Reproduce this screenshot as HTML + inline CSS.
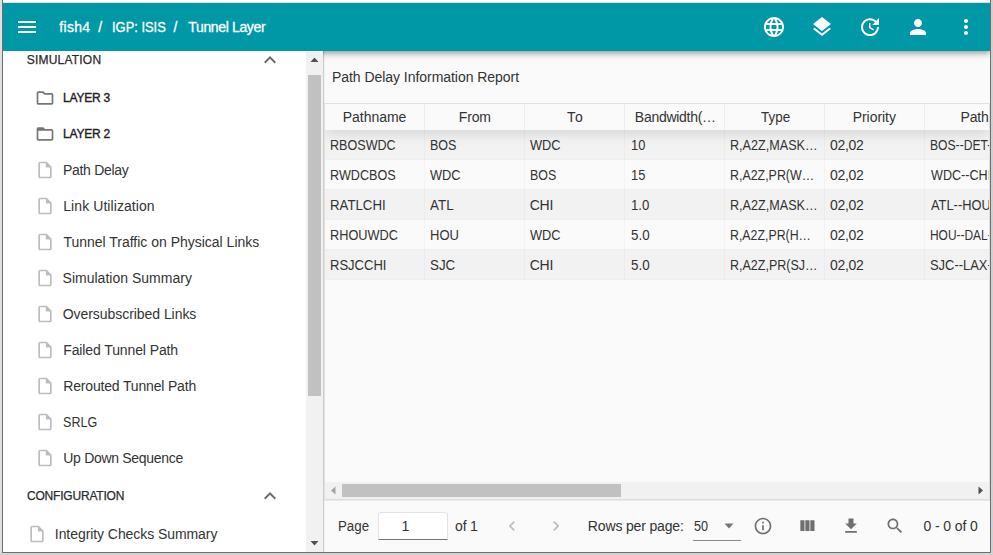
<!DOCTYPE html>
<html><head><meta charset="utf-8">
<style>
*{box-sizing:border-box;margin:0;padding:0}
html,body{width:993px;height:555px;overflow:hidden;background:#fff}
body{font-family:"Liberation Sans",sans-serif;color:#333;position:relative}
.abs{position:absolute}
.tx{position:absolute;white-space:pre;line-height:20px;height:20px;transform-origin:0 0}
#frameL{left:0;top:0;width:2px;height:555px;background:#e0e0e0}
#lineL{left:2px;top:0;width:1px;height:553px;background:#6e6e6e}
#frameR{left:991px;top:0;width:2px;height:555px;background:#d0d0d0}
#lineR{left:990px;top:0;width:1px;height:553px;background:#6e6e6e}
#lineB{left:2px;top:552px;width:989px;height:1px;background:#6e6e6e}
#frameB{left:0;top:553px;width:993px;height:2px;background:#d4d4d4}
#lineT{left:3px;top:2px;width:987px;height:1px;background:#e8dcdc}
#hdr{left:0;top:0;width:987px;height:48px;background:#0097a7;box-shadow:0 2px 4px -1px rgba(0,0,0,.2),0 4px 5px 0 rgba(0,0,0,.14),0 1px 10px 0 rgba(0,0,0,.12)}
#side{left:3px;top:51px;width:303px;height:501px;background:#fff}
#sb{left:306px;top:51px;width:17px;height:501px;background:#f1f1f1}
#sbt{left:308px;top:75px;width:13px;height:321px;background:#c1c1c1}
#vline{left:323px;top:51px;width:1px;height:501px;background:#cdcdcd}
#vline2{left:324px;top:51px;width:1px;height:501px;background:#f1f1f1}
#main{left:324px;top:51px;width:666px;height:501px;background:#fafafa}
.h{color:#fff;font-size:14px;-webkit-text-stroke:.3px #fff}
.sec{font-size:12px;color:#2b2b2b;-webkit-text-stroke:.25px #2b2b2b}
.lb{font-size:12px;color:#222;-webkit-text-stroke:.35px #222}
.it{font-size:14px;color:#333}
.th{font-size:14px;color:#333}
.td{font-size:14px;color:#333}
.ft{font-size:14px;color:#333}
</style></head><body>
<div id="frameL" class="abs"></div><div id="frameR" class="abs"></div><div id="frameB" class="abs"></div><div id="lineT" class="abs"></div>
<div id="main" class="abs"></div><div id="vline" class="abs"></div><div id="vline2" class="abs"></div>
<div class="abs" style="left:3px;top:3px;width:987px;height:80px;overflow:hidden"><div id="hdr" class="abs"></div></div>
<div id="side" class="abs"></div>
<div id="sb" class="abs"></div><div id="sbt" class="abs"></div>

<svg class="abs" style="left:15px;top:15px" width="24" height="24" viewBox="0 0 24 24"><path fill="#fff" d="M3 18h18v-2H3v2zm0-5h18v-2H3v2zm0-7v2h18V6H3z"/></svg>
<svg class="abs" style="left:762px;top:15px" width="24" height="24" viewBox="0 0 24 24"><path fill="#fff" d="M11.99 2C6.47 2 2 6.48 2 12s4.47 10 9.99 10C17.52 22 22 17.52 22 12S17.52 2 11.99 2zm6.93 6h-2.95c-.32-1.25-.78-2.45-1.38-3.56 1.84.63 3.37 1.91 4.33 3.56zM12 4.04c.83 1.2 1.48 2.53 1.91 3.96h-3.82c.43-1.43 1.08-2.76 1.91-3.96zM4.26 14C4.1 13.36 4 12.69 4 12s.1-1.36.26-2h3.38c-.08.66-.14 1.32-.14 2 0 .68.06 1.34.14 2H4.26zm.82 2h2.95c.32 1.25.78 2.45 1.38 3.56-1.84-.63-3.37-1.9-4.33-3.56zm2.95-8H5.08c.96-1.66 2.49-2.93 4.33-3.56C8.81 5.55 8.35 6.75 8.03 8zM12 19.96c-.83-1.2-1.48-2.53-1.91-3.96h3.82c-.43 1.43-1.08 2.76-1.91 3.96zM14.34 14H9.66c-.09-.66-.16-1.32-.16-2 0-.68.07-1.35.16-2h4.68c.09.65.16 1.32.16 2 0 .68-.07 1.34-.16 2zm.25 5.56c.6-1.11 1.06-2.31 1.38-3.56h2.95c-.96 1.65-2.49 2.93-4.33 3.56zM16.36 14c.08-.66.14-1.32.14-2 0-.68-.06-1.34-.14-2h3.38c.16.64.26 1.31.26 2s-.1 1.36-.26 2h-3.38z"/></svg>
<svg class="abs" style="left:810px;top:15px" width="24" height="24" viewBox="0 0 24 24"><path fill="#fff" d="M11.99 18.54l-7.37-5.73L3 14.07l9 7 9-7-1.63-1.27-7.38 5.74zM12 16l7.36-5.73L21 9l-9-7-9 7 1.63 1.27L12 16z"/></svg>
<svg class="abs" style="left:858px;top:15px" width="24" height="24" viewBox="0 0 24 24"><path fill="#fff" d="M21 10.12h-6.78l2.74-2.82c-2.73-2.7-7.15-2.8-9.88-.1-2.73 2.71-2.73 7.08 0 9.79s7.15 2.71 9.88 0C18.32 15.65 19 14.08 19 12.1h2c0 1.98-.88 4.55-2.64 6.29-3.51 3.48-9.21 3.48-12.72 0-3.5-3.47-3.53-9.11-.02-12.58s9.14-3.47 12.65 0L21 3v7.12zM12.5 8v4.25l3.5 2.08-.72 1.21L11 13V8h1.5z"/></svg>
<svg class="abs" style="left:906px;top:15px" width="24" height="24" viewBox="0 0 24 24"><path fill="#fff" d="M12 12c2.21 0 4-1.79 4-4s-1.79-4-4-4-4 1.790-4 4 1.79 4 4 4zm0 2c-2.67 0-8 1.34-8 4v2h16v-2c0-2.66-5.33-4-8-4z"/></svg>
<svg class="abs" style="left:954px;top:15px" width="24" height="24" viewBox="0 0 24 24"><path fill="#fff" d="M12 8c1.1 0 2-.9 2-2s-.9-2-2-2-2 .9-2 2 .9 2 2 2zm0 2c-1.1 0-2 .9-2 2s.9 2 2 2 2-.9 2-2-.9-2-2-2zm0 6c-1.1 0-2 .9-2 2s.9 2 2 2 2-.9 2-2-.9-2-2-2z"/></svg>
<svg class="abs" style="left:258px;top:48px" width="24" height="24" viewBox="0 0 24 24"><path fill="#6b6b6b" d="M12 8l-6 6 1.410 1.410L12 10.83l4.590 4.580L18 14z"/></svg>
<svg class="abs" style="left:258px;top:484px" width="24" height="24" viewBox="0 0 24 24"><path fill="#6b6b6b" d="M12 8l-6 6 1.410 1.410L12 10.83l4.590 4.580L18 14z"/></svg>
<svg class="abs" style="left:35px;top:88px" width="20" height="20" viewBox="0 0 24 24"><path fill="#757575" d="M9.17 6l2 2H20v10H4V6h5.17M10 4H4c-1.1 0-1.99.9-1.990 2L2 18c0 1.1.9 2 2 2h16c1.1 0 2-.9 2-2V8c0-1.1-.9-2-2-2h-8l-2-2z"/></svg>
<svg class="abs" style="left:35px;top:124px" width="20" height="20" viewBox="0 0 24 24"><path fill="#757575" d="M20 6h-8l-2-2H4c-1.1 0-1.99.9-1.990 2L2 18c0 1.1.9 2 2 2h16c1.1 0 2-.9 2-2V8c0-1.1-.9-2-2-2zm0 12H4V8h16v10z"/></svg>
<svg class="abs" style="left:35px;top:160px" width="20" height="20" viewBox="0 0 24 24"><path fill="#bdbdbd" d="M14 2H6c-1.1 0-1.99.9-1.990 2L4 20c0 1.1.89 2 1.99 2H18c1.1 0 2-.9 2-2V8l-6-6zM6 20V4h7v5h5v11H6z"/></svg>
<svg class="abs" style="left:35px;top:196px" width="20" height="20" viewBox="0 0 24 24"><path fill="#bdbdbd" d="M14 2H6c-1.1 0-1.99.9-1.990 2L4 20c0 1.1.89 2 1.99 2H18c1.1 0 2-.9 2-2V8l-6-6zM6 20V4h7v5h5v11H6z"/></svg>
<svg class="abs" style="left:35px;top:232px" width="20" height="20" viewBox="0 0 24 24"><path fill="#bdbdbd" d="M14 2H6c-1.1 0-1.99.9-1.990 2L4 20c0 1.1.89 2 1.99 2H18c1.1 0 2-.9 2-2V8l-6-6zM6 20V4h7v5h5v11H6z"/></svg>
<svg class="abs" style="left:35px;top:268px" width="20" height="20" viewBox="0 0 24 24"><path fill="#bdbdbd" d="M14 2H6c-1.1 0-1.99.9-1.990 2L4 20c0 1.1.89 2 1.99 2H18c1.1 0 2-.9 2-2V8l-6-6zM6 20V4h7v5h5v11H6z"/></svg>
<svg class="abs" style="left:35px;top:304px" width="20" height="20" viewBox="0 0 24 24"><path fill="#bdbdbd" d="M14 2H6c-1.1 0-1.99.9-1.990 2L4 20c0 1.1.89 2 1.99 2H18c1.1 0 2-.9 2-2V8l-6-6zM6 20V4h7v5h5v11H6z"/></svg>
<svg class="abs" style="left:35px;top:340px" width="20" height="20" viewBox="0 0 24 24"><path fill="#bdbdbd" d="M14 2H6c-1.1 0-1.99.9-1.990 2L4 20c0 1.1.89 2 1.99 2H18c1.1 0 2-.9 2-2V8l-6-6zM6 20V4h7v5h5v11H6z"/></svg>
<svg class="abs" style="left:35px;top:376px" width="20" height="20" viewBox="0 0 24 24"><path fill="#bdbdbd" d="M14 2H6c-1.1 0-1.99.9-1.990 2L4 20c0 1.1.89 2 1.99 2H18c1.1 0 2-.9 2-2V8l-6-6zM6 20V4h7v5h5v11H6z"/></svg>
<svg class="abs" style="left:35px;top:412px" width="20" height="20" viewBox="0 0 24 24"><path fill="#bdbdbd" d="M14 2H6c-1.1 0-1.99.9-1.990 2L4 20c0 1.1.89 2 1.99 2H18c1.1 0 2-.9 2-2V8l-6-6zM6 20V4h7v5h5v11H6z"/></svg>
<svg class="abs" style="left:35px;top:448px" width="20" height="20" viewBox="0 0 24 24"><path fill="#bdbdbd" d="M14 2H6c-1.1 0-1.99.9-1.990 2L4 20c0 1.1.89 2 1.99 2H18c1.1 0 2-.9 2-2V8l-6-6zM6 20V4h7v5h5v11H6z"/></svg>
<svg class="abs" style="left:27px;top:524px" width="20" height="20" viewBox="0 0 24 24"><path fill="#bdbdbd" d="M14 2H6c-1.1 0-1.99.9-1.990 2L4 20c0 1.1.89 2 1.99 2H18c1.1 0 2-.9 2-2V8l-6-6zM6 20V4h7v5h5v11H6z"/></svg>
<svg class="abs" style="left:306px;top:51px" width="17" height="17"><path d="M8.5 6.5 L12.5 11 L4.500 11z" fill="#505050"/></svg>
<svg class="abs" style="left:306px;top:535px" width="17" height="17"><path d="M8.5 10.5 L12.5 6 L4.500 6z" fill="#505050"/></svg>
<div class="abs" style="left:324px;top:103px;width:666px;height:397px;border:1px solid #e1e1e1;border-bottom-color:#dedede"></div>
<div class="abs" style="left:325px;top:104px;width:664px;height:378px;overflow:hidden">
<div class="abs" style="left:0;top:26px;width:664px;height:30px;background:#f2f2f2"></div>
<div class="abs" style="left:0;top:55px;width:664px;height:1px;background:#eee"></div>
<div class="abs" style="left:0;top:56px;width:664px;height:30px;background:#fafafa"></div>
<div class="abs" style="left:0;top:85px;width:664px;height:1px;background:#eee"></div>
<div class="abs" style="left:0;top:86px;width:664px;height:30px;background:#f2f2f2"></div>
<div class="abs" style="left:0;top:115px;width:664px;height:1px;background:#eee"></div>
<div class="abs" style="left:0;top:116px;width:664px;height:30px;background:#fafafa"></div>
<div class="abs" style="left:0;top:145px;width:664px;height:1px;background:#eee"></div>
<div class="abs" style="left:0;top:146px;width:664px;height:30px;background:#f2f2f2"></div>
<div class="abs" style="left:0;top:175px;width:664px;height:1px;background:#eee"></div>
<div class="abs" style="left:99px;top:26px;width:1px;height:150px;background:rgba(0,0,0,.025)"></div>
<div class="abs" style="left:199px;top:26px;width:1px;height:150px;background:rgba(0,0,0,.025)"></div>
<div class="abs" style="left:299px;top:26px;width:1px;height:150px;background:rgba(0,0,0,.025)"></div>
<div class="abs" style="left:399px;top:26px;width:1px;height:150px;background:rgba(0,0,0,.025)"></div>
<div class="abs" style="left:499px;top:26px;width:1px;height:150px;background:rgba(0,0,0,.025)"></div>
<div class="abs" style="left:599px;top:26px;width:1px;height:150px;background:rgba(0,0,0,.025)"></div>
<div class="abs" style="left:0;top:0;width:664px;height:26px;background:#fafafa;box-shadow:0 2px 15px 0 rgba(0,0,0,.15)"></div>
<div class="abs" style="left:99px;top:0;width:1px;height:26px;background:#ededed"></div>
<div class="abs" style="left:199px;top:0;width:1px;height:26px;background:#ededed"></div>
<div class="abs" style="left:299px;top:0;width:1px;height:26px;background:#ededed"></div>
<div class="abs" style="left:399px;top:0;width:1px;height:26px;background:#ededed"></div>
<div class="abs" style="left:499px;top:0;width:1px;height:26px;background:#ededed"></div>
<div class="abs" style="left:599px;top:0;width:1px;height:26px;background:#ededed"></div>
</div>
<div class="abs" style="left:325px;top:482px;width:664px;height:17px;background:#f1f1f1"></div>
<div class="abs" style="left:342px;top:484px;width:279px;height:13px;background:#c1c1c1"></div>
<svg class="abs" style="left:325px;top:482px" width="17" height="17"><path d="M6 8.5 L10.5 4.500 L10.5 12.5z" fill="#a3a3a3"/></svg>
<svg class="abs" style="left:972px;top:482px" width="17" height="17"><path d="M11 8.5 L6.500 4.500 L6.500 12.5z" fill="#505050"/></svg>
<div class="abs" style="left:325px;top:500px;width:665px;height:1px;background:#e8e8e8"></div>

<div class="abs" style="left:378px;top:512px;width:70px;height:28px;background:#fff;border:1px solid #e3e3e3;border-bottom:1px solid #757575;border-radius:3px 3px 0 0;z-index:0"></div>
<div class="abs" style="left:693px;top:540px;width:48px;height:1px;background:#8a8a8a"></div>
<svg class="abs" style="left:724px;top:523px" width="10" height="6"><path d="M0.500 0.500 L9.500 0.500 L5 5.500z" fill="#757575"/></svg>

<svg class="abs" style="left:502px;top:516px" width="20" height="20" viewBox="0 0 24 24"><path fill="#bdbdbd" d="M15.410 7.410L14 6l-6 6 6 6 1.410-1.410L10.830 12z"/></svg>
<svg class="abs" style="left:546px;top:516px" width="20" height="20" viewBox="0 0 24 24"><path fill="#bdbdbd" d="M10 6L8.590 7.410 13.170 12l-4.580 4.590L10 18l6-6z"/></svg>
<svg class="abs" style="left:753px;top:516px" width="20" height="20" viewBox="0 0 24 24"><path fill="#6f6f6f" d="M11 7h2v2h-2zm0 4h2v6h-2zm1-9C6.480 2 2 6.480 2 12s4.480 10 10 10 10-4.480 10-10S17.520 2 12 2zm0 18c-4.410 0-8-3.590-8-8s3.590-8 8-8 8 3.590 8 8-3.590 8-8 8z"/></svg>
<svg class="abs" style="left:797px;top:516px" width="20" height="20" viewBox="0 0 24 24"><path fill="#6f6f6f" d="M10 18h5V5h-5v13zm-6 0h5V5H4v13zM16 5v13h5V5h-5z"/></svg>
<svg class="abs" style="left:841px;top:516px" width="20" height="20" viewBox="0 0 24 24"><path fill="#6f6f6f" d="M19 9h-4V3H9v6H5l7 7 7-7zM5 18v2h14v-2H5z"/></svg>
<svg class="abs" style="left:885px;top:516px" width="20" height="20" viewBox="0 0 24 24"><path fill="#6f6f6f" d="M15.5 14h-.79l-.28-.27C15.41 12.59 16 11.11 16 9.5 16 5.91 13.09 3 9.5 3S3 5.91 3 9.5 5.91 16 9.5 16c1.61 0 3.09-.59 4.23-1.57l.27.28v.79l5 4.990L20.490 19l-4.990-5zm-6 0C7.010 14 5 11.990 5 9.5S7.010 5 9.5 5 14 7.010 14 9.500 11.990 14 9.500 14z"/></svg>
<div class="tx h" style="left:59.34px;top:17px;letter-spacing:0.309px">fish4</div>
<div class="tx h" style="left:98.27px;top:17px;">/</div>
<div class="tx h" style="left:111.74px;top:17px;transform:scaleX(0.9222)">IGP: ISIS</div>
<div class="tx h" style="left:173.57px;top:17px;">/</div>
<div class="tx h" style="left:188.32px;top:17px;letter-spacing:-0.36px">Tunnel Layer</div>
<div class="tx sec" style="left:26.7px;top:50px;letter-spacing:0.214px">SIMULATION</div>
<div class="tx lb" style="left:63.11px;top:88px;letter-spacing:-0.242px">LAYER 3</div>
<div class="tx lb" style="left:63.11px;top:124px;letter-spacing:-0.238px">LAYER 2</div>
<div class="tx it" style="left:63.06px;top:160px;letter-spacing:-0.312px">Path Delay</div>
<div class="tx it" style="left:63.26px;top:196px;letter-spacing:0.075px">Link Utilization</div>
<div class="tx it" style="left:63.42px;top:232px;letter-spacing:-0.008px">Tunnel Traffic on Physical Links</div>
<div class="tx it" style="left:62.54px;top:268px;letter-spacing:0.012px">Simulation Summary</div>
<div class="tx it" style="left:62.71px;top:304px;letter-spacing:-0.05px">Oversubscribed Links</div>
<div class="tx it" style="left:63.26px;top:340px;letter-spacing:-0.11px">Failed Tunnel Path</div>
<div class="tx it" style="left:63.26px;top:376px;letter-spacing:-0.17px">Rerouted Tunnel Path</div>
<div class="tx it" style="left:62.87px;top:412px;transform:scaleX(0.8974)">SRLG</div>
<div class="tx it" style="left:63.29px;top:448px;letter-spacing:-0.303px">Up Down Sequence</div>
<div class="tx sec" style="left:26.94px;top:486px;letter-spacing:-0.191px">CONFIGURATION</div>
<div class="tx it" style="left:54.83px;top:524px;letter-spacing:-0.068px">Integrity Checks Summary</div>
<div class="tx it" style="left:331.96px;top:67px;letter-spacing:-0.044px">Path Delay Information Report</div>
<div class="tx th" style="left:342.76px;top:107px;letter-spacing:-0.034px">Pathname</div>
<div class="tx th" style="left:458.86px;top:107px;letter-spacing:-0.18px">From</div>
<div class="tx th" style="left:567.02px;top:107px;letter-spacing:0.961px">To</div>
<div class="tx th" style="left:634.86px;top:107px;letter-spacing:-0.284px">Bandwidth(…</div>
<div class="tx th" style="left:760.8px;top:107px;transform:scaleX(0.9595)">Type</div>
<div class="tx th" style="left:852.66px;top:107px;letter-spacing:-0.039px">Priority</div>
<div class="tx th" style="left:960.46px;top:107px;letter-spacing:-0.158px">Path</div>
<div class="tx td" style="left:329.99px;top:135px;transform:scaleX(0.8988)">RBOSWDC</div>
<div class="tx td" style="left:430.09px;top:135px;transform:scaleX(0.8939)">BOS</div>
<div class="tx td" style="left:530.4px;top:135px;transform:scaleX(0.9153)">WDC</div>
<div class="tx td" style="left:631.12px;top:135px;transform:scaleX(0.918)">10</div>
<div class="tx td" style="left:730.29px;top:135px;transform:scaleX(0.9014)">R,A2Z,MASK…</div>
<div class="tx td" style="left:829.9px;top:135px;letter-spacing:-0.272px">02,02</div>
<div class="tx td" style="left:329.99px;top:165px;transform:scaleX(0.9009)">RWDCBOS</div>
<div class="tx td" style="left:430.4px;top:165px;transform:scaleX(0.9153)">WDC</div>
<div class="tx td" style="left:530.09px;top:165px;transform:scaleX(0.8852)">BOS</div>
<div class="tx td" style="left:631.12px;top:165px;transform:scaleX(0.9217)">15</div>
<div class="tx td" style="left:730.29px;top:165px;transform:scaleX(0.8861)">R,A2Z,PR(W…</div>
<div class="tx td" style="left:829.9px;top:165px;letter-spacing:-0.272px">02,02</div>
<div class="tx td" style="left:329.97px;top:195px;transform:scaleX(0.9452)">RATLCHI</div>
<div class="tx td" style="left:430.4px;top:195px;transform:scaleX(0.9582)">ATL</div>
<div class="tx td" style="left:529.65px;top:195px;letter-spacing:-0.218px">CHI</div>
<div class="tx td" style="left:631.09px;top:195px;transform:scaleX(0.9422)">1.0</div>
<div class="tx td" style="left:730.29px;top:195px;transform:scaleX(0.9014)">R,A2Z,MASK…</div>
<div class="tx td" style="left:829.9px;top:195px;letter-spacing:-0.272px">02,02</div>
<div class="tx td" style="left:329.99px;top:225px;transform:scaleX(0.9098)">RHOUWDC</div>
<div class="tx td" style="left:430.09px;top:225px;transform:scaleX(0.93)">HOU</div>
<div class="tx td" style="left:530.4px;top:225px;transform:scaleX(0.9153)">WDC</div>
<div class="tx td" style="left:630.71px;top:225px;transform:scaleX(0.957)">5.0</div>
<div class="tx td" style="left:730.29px;top:225px;transform:scaleX(0.8822)">R,A2Z,PR(H…</div>
<div class="tx td" style="left:829.9px;top:225px;letter-spacing:-0.272px">02,02</div>
<div class="tx td" style="left:329.99px;top:255px;transform:scaleX(0.9302)">RSJCCHI</div>
<div class="tx td" style="left:429.55px;top:255px;transform:scaleX(0.9539)">SJC</div>
<div class="tx td" style="left:529.65px;top:255px;letter-spacing:-0.218px">CHI</div>
<div class="tx td" style="left:630.71px;top:255px;transform:scaleX(0.957)">5.0</div>
<div class="tx td" style="left:730.29px;top:255px;transform:scaleX(0.8936)">R,A2Z,PR(SJ…</div>
<div class="tx td" style="left:829.9px;top:255px;letter-spacing:-0.272px">02,02</div>
<div class="tx ft" style="left:338.17px;top:516px;transform:scaleX(0.9497)">Page</div>
<div class="tx ft" style="left:401.49px;top:516px;">1</div>
<div class="tx ft" style="left:455.07px;top:516px;letter-spacing:-0.209px">of 1</div>
<div class="tx ft" style="left:587.86px;top:516px;letter-spacing:-0.16px">Rows per page:</div>
<div class="tx ft" style="left:693.83px;top:516px;transform:scaleX(0.904)">50</div>
<div class="tx ft" style="left:923.4px;top:516px;letter-spacing:-0.091px">0 - 0 of 0</div>
<div class="abs" style="left:926px;top:135px;width:63px;height:20px;overflow:hidden"><div class="tx td" style="left:4.09px;top:0;transform:scaleX(0.8657)">BOS--DET--CHI--WDC</div></div>
<div class="abs" style="left:926px;top:165px;width:63px;height:20px;overflow:hidden"><div class="tx td" style="left:4.50px;top:0;transform:scaleX(0.8996)">WDC--CHI--DET--BOS</div></div>
<div class="abs" style="left:926px;top:195px;width:63px;height:20px;overflow:hidden"><div class="tx td" style="left:4.50px;top:0;transform:scaleX(0.9183)">ATL--HOU--DAL--CHI</div></div>
<div class="abs" style="left:926px;top:225px;width:63px;height:20px;overflow:hidden"><div class="tx td" style="left:4.11px;top:0;transform:scaleX(0.8526)">HOU--DAL--ATL--WDC</div></div>
<div class="abs" style="left:926px;top:255px;width:63px;height:20px;overflow:hidden"><div class="tx td" style="left:3.57px;top:0;transform:scaleX(0.9221)">SJC--LAX--DEN--CHI</div></div>
<div id="lineL" class="abs"></div><div id="lineR" class="abs"></div><div id="lineB" class="abs"></div>
</body></html>
